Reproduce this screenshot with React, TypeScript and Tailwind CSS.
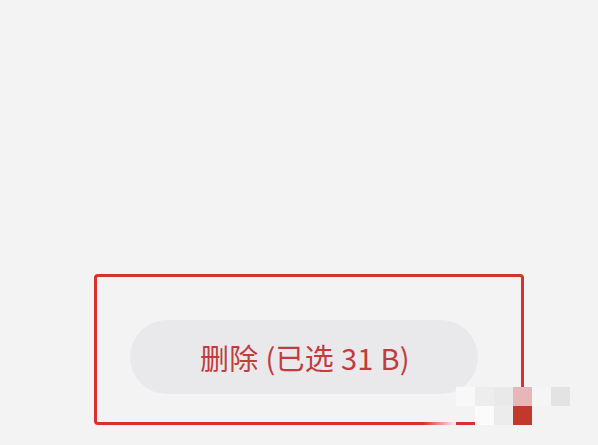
export default function App() {
  const marks = [
    { x: 456, y: 387, c: 'bg-[#f8f8f8]' },
    { x: 475, y: 387, c: 'bg-[#ededed]' },
    { x: 494, y: 387, c: 'bg-[#e9e9e9]' },
    { x: 513, y: 387, c: 'bg-[#e8b6b9]' },
    { x: 532, y: 387, c: 'bg-[#f5f5f5]' },
    { x: 551, y: 387, c: 'bg-[#e3e3e3]' },
    { x: 475, y: 406, c: 'bg-[#fbfbfd]' },
    { x: 494, y: 406, c: 'bg-[#ececec]' },
    { x: 513, y: 406, c: 'bg-[#c0392b]' },
  ];

  return (
    <div
      className="relative w-[598px] h-[445px] bg-[#f3f3f3] overflow-hidden"
      style={{ fontFamily: '"Noto Sans CJK SC", "Noto Sans", sans-serif' }}
    >
      <div className="pt-[274px] pl-[94px]">
        <div className="w-[430px] h-[151px] border-[3px] border-[#d8302a] rounded-[4px] pt-[43px] pl-[33px]">
          <div className="w-[348px] h-[74px] rounded-full bg-[#e9e9eb] flex items-center justify-center pl-[2px]">
            <span className="text-[29px] leading-none text-[#c23b3d] tracking-[0.3px]">删除 (已选 31 B)</span>
          </div>
        </div>
      </div>

      {/* bottom edge fades out under the watermark */}
      <div className="absolute left-[423px] top-[422px] w-[33px] h-[3px] bg-gradient-to-r from-[#d8302a]/0 to-[#f3f3f3]" />

      {marks.map((m, i) => (
        <div
          key={i}
          className={`absolute w-[19px] h-[19px] ${m.c}`}
          style={{ left: m.x, top: m.y }}
        />
      ))}
    </div>
  );
}
